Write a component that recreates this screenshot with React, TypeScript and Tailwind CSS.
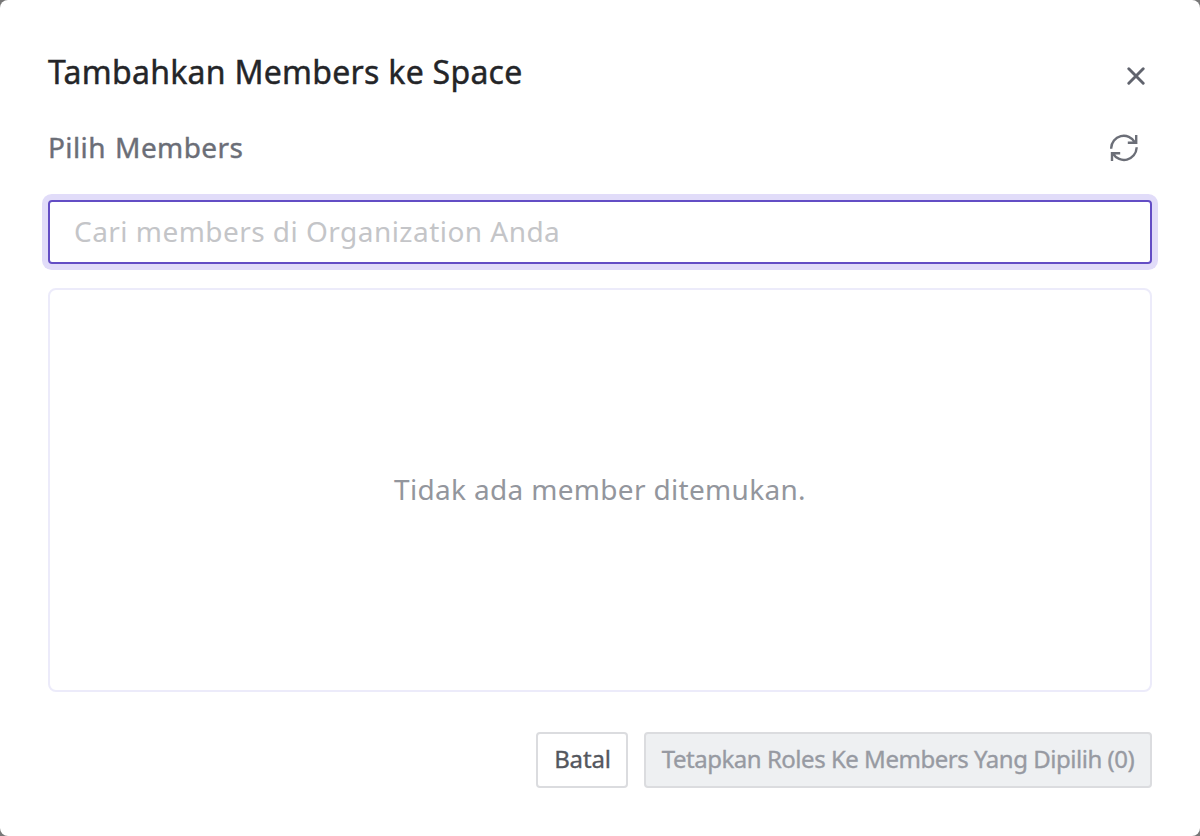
import { useState } from "react";

export default function App() {
  const [query, setQuery] = useState("");
  return (
    <div className="h-[836px] w-[1200px] bg-[#777] font-['Noto_Sans',sans-serif]">
      <div role="dialog" className="flex h-full flex-col rounded-[8px] bg-white px-12">
        <header className="mt-12 flex h-12 items-center justify-between">
          <h1 className="text-[32px] leading-[48px] tracking-[0.28px] text-[#242528] [-webkit-text-stroke:0.45px_#242528]">Tambahkan Members ke Space</h1>
          <button aria-label="Tutup" className="mt-2 flex size-8 items-center justify-center text-[#60636d]">
            <svg width="18" height="18" viewBox="0 0 18 18" fill="none" stroke="currentColor" strokeWidth="2.9" strokeLinecap="round"><path d="M1.8 1.8 16.2 16.2M16.2 1.8 1.8 16.2" /></svg>
          </button>
        </header>
        <div className="mt-7 flex h-12 items-center justify-between pr-3 text-[#6b6e77]">
          <label className="-mt-0.5 text-[28px] tracking-[0.4px] [word-spacing:1.5px] [-webkit-text-stroke:0.4px_#6b6e77]">Pilih Members</label>
          <svg width="32" height="32" viewBox="0 0 32 32" fill="none" stroke="currentColor" strokeWidth="2.4" strokeLinejoin="miter"><path d="M3.2 16.8V16A12.6 12.6 0 0 1 26.8 10.2M28.2 3V10.8H19.8M28.6 15.2V16A12.6 12.6 0 0 1 5.2 21.8M4 29V21.2H12.2" /></svg>
        </div>
        <input value={query} onChange={(e) => setQuery(e.target.value)} placeholder="Cari members di Organization Anda" className="mt-7 h-16 rounded-[4px] border-2 border-[#634dc5] px-6 pb-0.5 text-[28px] tracking-[0.46px] shadow-[0_0_0_6px_#e1dcf9] outline-none placeholder:text-[#c4c5c8]" />
        <div className="mt-6 flex h-[404px] items-center justify-center rounded-[8px] border-2 border-[#ecebfa] pb-0.5 text-[28px] tracking-[0.32px] text-[#93969d]">Tidak ada member ditemukan.</div>
        <footer className="mt-10 flex justify-end gap-4 text-[24px]">
          <button className="h-14 w-[92px] rounded-[4px] border-2 border-[#dbdcdf] pb-0.5 pl-px tracking-[-0.15px] text-[#54575e] [-webkit-text-stroke:0.35px_#54575e]">Batal</button>
          <button disabled className="h-14 w-[508px] rounded-[4px] border-2 border-[#dbdcdf] bg-[#eef0f2] pb-0.5 tracking-[-0.48px] whitespace-nowrap text-[#979aa2] [-webkit-text-stroke:0.35px_#979aa2]">Tetapkan Roles Ke Members Yang Dipilih (0)</button>
        </footer>
      </div>
    </div>
  );
}
